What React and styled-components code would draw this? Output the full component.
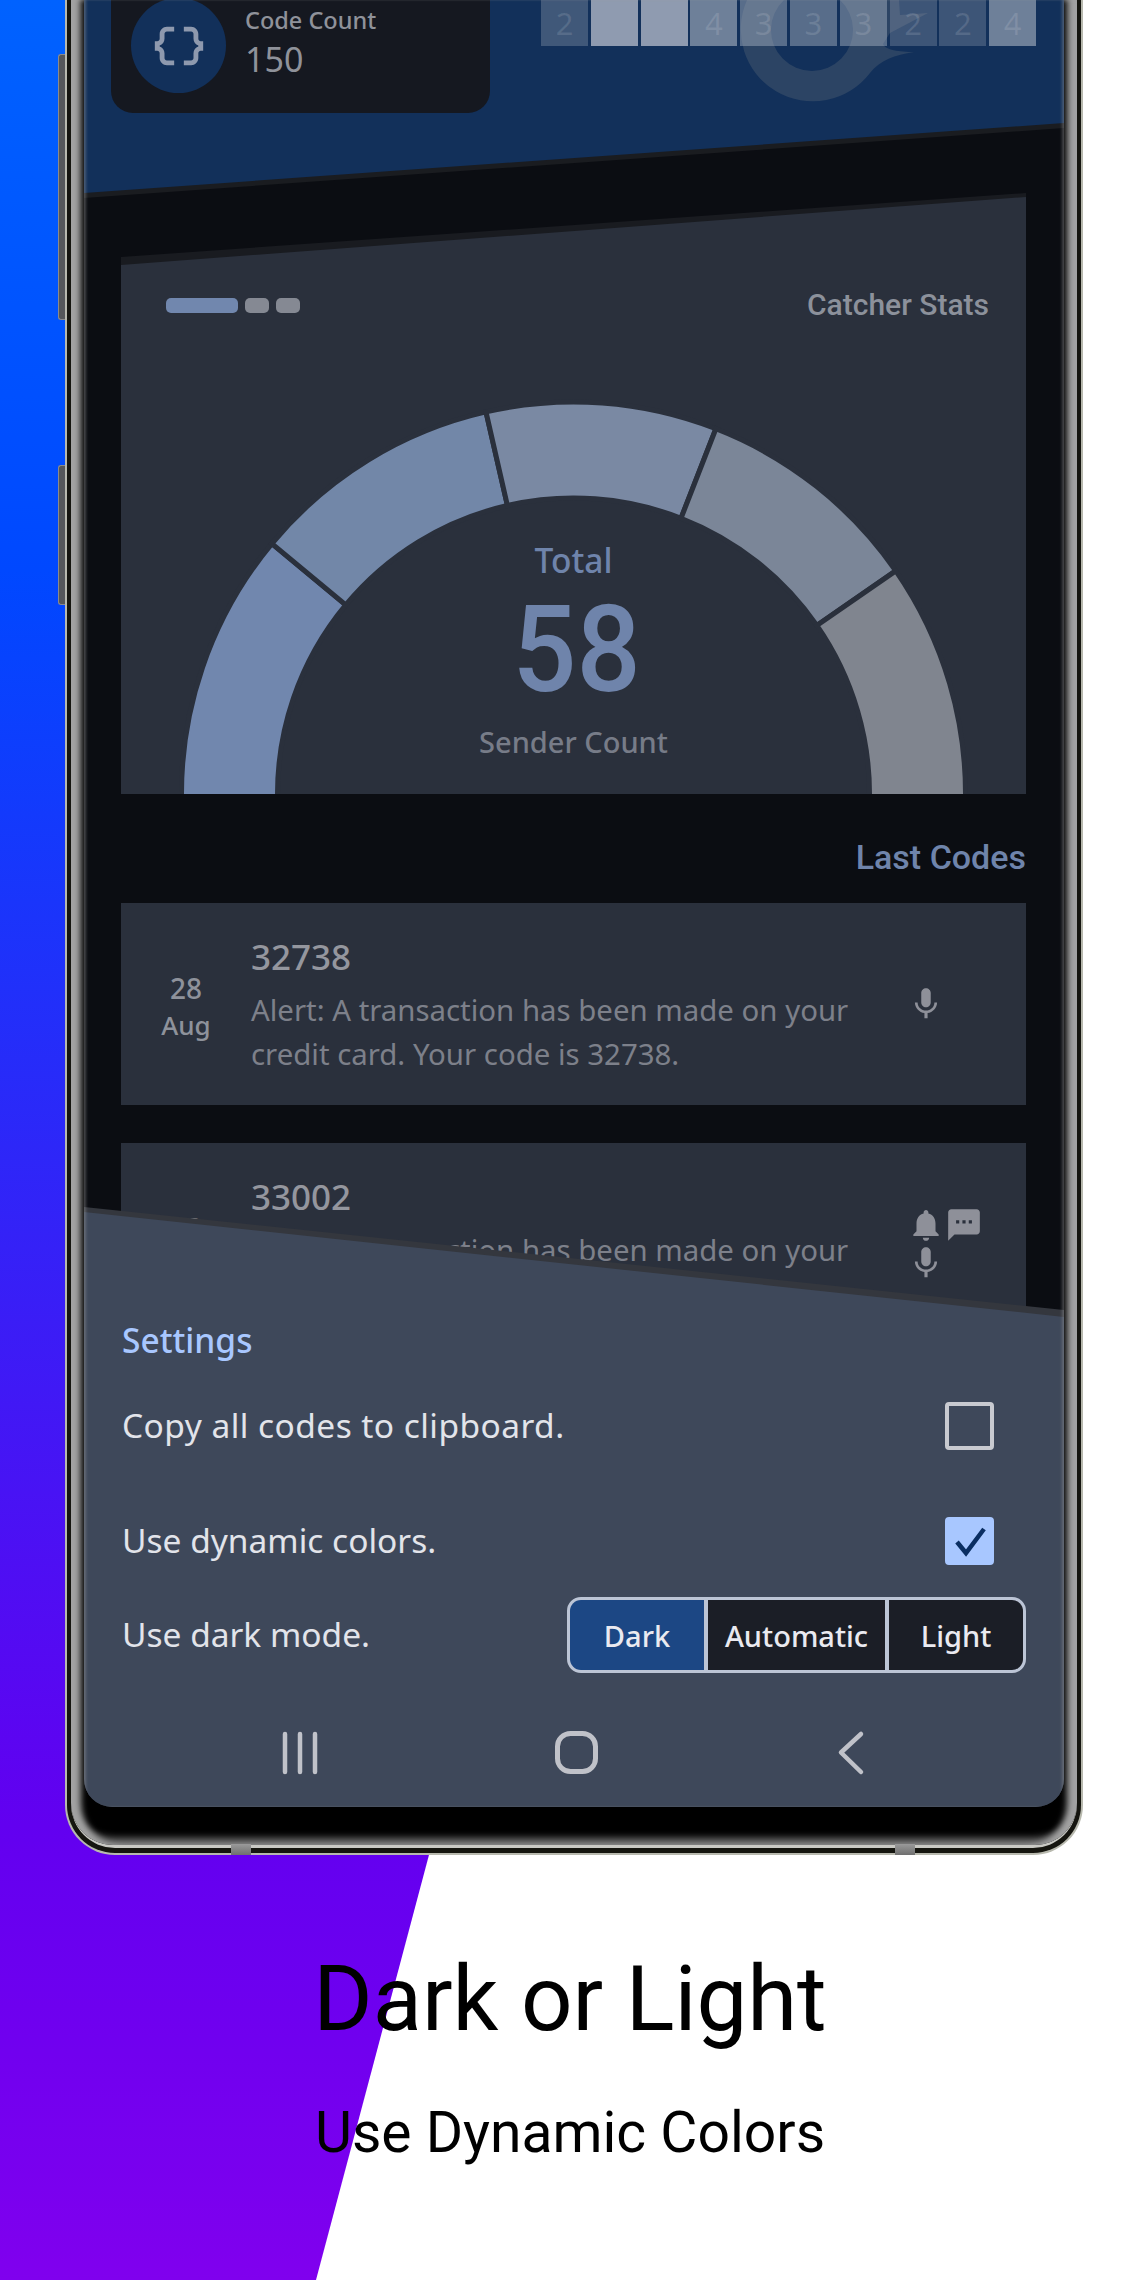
import styled, { createGlobalStyle } from "styled-components";

const GlobalStyle = createGlobalStyle`
  html, body {
    margin: 0;
    padding: 0;
    background: #fff;
  }
  * {
    box-sizing: border-box;
  }
`;

const HEAT_CELLS = [
  { level: 0.29, label: "2" },
  { level: 0.78, label: "" },
  { level: 0.78, label: "" },
  { level: 0.58, label: "4" },
  { level: 0.44, label: "3" },
  { level: 0.44, label: "3" },
  { level: 0.44, label: "3" },
  { level: 0.27, label: "2" },
  { level: 0.27, label: "2" },
  { level: 0.58, label: "4" },
];

const SEGMENTS = [
  { from: -2, to: 39.7, color: "#7187ae" },
  { from: 39.7, to: 77.1, color: "#7287a8" },
  { from: 77.1, to: 111.3, color: "#7a89a3" },
  { from: 111.3, to: 145.3, color: "#7b8698" },
  { from: 145.3, to: 182, color: "#80858f" },
];

const MESSAGE = "Alert: A transaction has been made on your credit card. Your code is ";

const ICONS = {
  mic: "M12 14c1.66 0 2.99-1.34 2.99-3L15 5c0-1.66-1.34-3-3-3S9 3.34 9 5v6c0 1.66 1.34 3 3 3zm5.3-3c0 3-2.54 5.1-5.3 5.1S6.7 14 6.7 11H5c0 3.41 2.72 6.23 6 6.72V21h2v-3.28c3.28-.48 6-3.3 6-6.72h-1.7z",
  bell: "M12 22c1.1 0 2-.9 2-2h-4c0 1.1.89 2 2 2zm6-6v-5c0-3.07-1.64-5.64-4.5-6.32V4c0-.83-.67-1.5-1.5-1.5s-1.5.67-1.5 1.5v.68C7.63 5.36 6 7.92 6 11v5l-2 2v1h16v-1l-2-2z",
  sms: "M20 2H4c-1.1 0-1.99.9-1.99 2L2 22l4-4h14c1.1 0 2-.9 2-2V4c0-1.1-.9-2-2-2zM9 11H7V9h2v2zm4 0h-2V9h2v2zm4 0h-2V9h2v2z",
};

const BRACES =
  "M4 7v2c0 .55-.45 1-1 1H2v4h1c.55 0 1 .45 1 1v2c0 1.65 1.35 3 3 3h3v-2H7c-.55 0-1-.45-1-1v-2c0-1.3-.84-2.42-2-2.83v-.34C5.16 11.42 6 10.3 6 9V7c0-.55.45-1 1-1h3V4H7C5.35 4 4 5.35 4 7zM21 10c-.55 0-1-.45-1-1V7c0-1.65-1.35-3-3-3h-3v2h3c.55 0 1 .45 1 1v2c0 1.3.84 2.42 2 2.83v.34c-1.16.41-2 1.52-2 2.83v2c0 .55-.45 1-1 1h-3v2h3c1.65 0 3-1.35 3-3v-2c0-.55.45-1 1-1h1v-4h-1z";

// donut slice, angles run clockwise from the left end of the half circle
const slicePath = (from, to) => {
  const cx = 389.5;
  const cy = 390;
  const outer = 392;
  const inner = 296;
  const point = (r, deg) => {
    const rad = (deg * Math.PI) / 180;
    return `${(cx - r * Math.cos(rad)).toFixed(2)} ${(cy - r * Math.sin(rad)).toFixed(2)}`;
  };
  return `M${point(outer, from)} A${outer} ${outer} 0 0 1 ${point(outer, to)} L${point(inner, to)} A${inner} ${inner} 0 0 0 ${point(inner, from)} Z`;
};

const MaterialIcon = ({ path, size = 38 }) => (
  <IconSvg viewBox="0 0 24 24" $size={size}>
    <path d={path} />
  </IconSvg>
);

const CodeRow = ({ code, icons }) => (
  <Row>
    <DateCol>
      <DateDay>28</DateDay>
      <DateMonth>Aug</DateMonth>
    </DateCol>
    <TextCol>
      <CodeValue>{code}</CodeValue>
      <CodeMessage>
        {MESSAGE}
        {code}.
      </CodeMessage>
    </TextCol>
    <IconCol>
      {icons.map((name) => (
        <MaterialIcon key={name} path={ICONS[name]} />
      ))}
    </IconCol>
  </Row>
);

const App = () => {
  return (
    <Page>
      <GlobalStyle />
      <Backdrop />
      <Device>
        <SideButton $top={54} $height={266} />
        <SideButton $top={465} $height={140} />
        <BottomNub $left={166} />
        <BottomNub $left={830} />
        <Rim>
          <Band>
            <Bezel>
              <Screen>
                <HeroEdge>
                  <Hero>
                    <Watermark viewBox="0 0 220 110" aria-hidden="true">
                      <path d="M27 0 A72 72 0 0 0 150 73 C 160 60 175 55 194 52 C 180 52 165 50 163 44 L 170 33 L 208 13 L 180 15 L 179 0 L 120 0 A41 41 0 1 1 64 0 Z" />
                    </Watermark>
                    <CountCard>
                      <CountBadge>
                        <BadgeSvg viewBox="0 0 24 24">
                          <path d={BRACES} />
                        </BadgeSvg>
                      </CountBadge>
                      <CountText>
                        <CountLabel>Code Count</CountLabel>
                        <CountValue>150</CountValue>
                      </CountText>
                    </CountCard>
                    <HeatRow>
                      {HEAT_CELLS.map((cell, i) => (
                        <HeatCell key={i} $level={cell.level}>
                          {cell.label}
                        </HeatCell>
                      ))}
                    </HeatRow>
                  </Hero>
                </HeroEdge>

                <Content>
                  <StatsEdge>
                    <StatsPanel>
                      <StatsHeader>
                        <Pills>
                          <Pill $width={72} $active />
                          <Pill $width={24} />
                          <Pill $width={24} />
                        </Pills>
                        <StatsTitle>Catcher Stats</StatsTitle>
                      </StatsHeader>
                      <Gauge>
                        <GaugeSvg viewBox="0 0 779 390">
                          {SEGMENTS.map((s) => (
                            <path
                              key={s.from}
                              d={slicePath(s.from, s.to)}
                              fill={s.color}
                              stroke="#2a303c"
                              strokeWidth="5"
                            />
                          ))}
                        </GaugeSvg>
                        <GaugeLabels>
                          <GaugeTotal>Total</GaugeTotal>
                          <GaugeNumber>58</GaugeNumber>
                          <GaugeCaption>Sender Count</GaugeCaption>
                        </GaugeLabels>
                      </Gauge>
                    </StatsPanel>
                  </StatsEdge>

                  <SectionLabel>Last Codes</SectionLabel>
                  <RowList>
                    <CodeRow code="32738" icons={["mic"]} />
                    <CodeRow code="33002" icons={["bell", "sms", "mic"]} />
                  </RowList>
                </Content>

                <SheetEdge>
                  <Sheet>
                    <SheetTitle>Settings</SheetTitle>
                    <SettingRow $height={48} $gap={42}>
                      <SettingLabel $spacing={0.45}>Copy all codes to clipboard.</SettingLabel>
                      <CheckBox />
                    </SettingRow>
                    <SettingRow $height={49} $gap={66}>
                      <SettingLabel>Use dynamic colors.</SettingLabel>
                      <CheckBox $checked>
                        <CheckSvg viewBox="0 0 36 36">
                          <path d="M5 19 L14 30 L32 6" />
                        </CheckSvg>
                      </CheckBox>
                    </SettingRow>
                    <SettingRow $height={76} $gap={32}>
                      <SettingLabel>Use dark mode.</SettingLabel>
                      <Segmented>
                        <Segment $width={134} $active>
                          Dark
                        </Segment>
                        <Segment $width={177}>Automatic</Segment>
                        <Segment $width={134}>Light</Segment>
                      </Segmented>
                    </SettingRow>
                    <NavBar>
                      <NavSvg width="34" height="43" viewBox="0 0 34 43">
                        <path d="M2 3 V41 M17 3 V41 M32 3 V41" />
                      </NavSvg>
                      <NavSvg width="43" height="43" viewBox="0 0 43 43" $weight={5}>
                        <rect x="0.5" y="2.5" width="38" height="38" rx="13" />
                      </NavSvg>
                      <NavSvg width="24" height="43" viewBox="0 0 24 43">
                        <path d="M22 3 L2 21.5 L22 41" />
                      </NavSvg>
                    </NavBar>
                  </Sheet>
                </SheetEdge>
                <ScreenGlow />
              </Screen>
            </Bezel>
          </Band>
        </Rim>
      </Device>

      <Caption>
        <CaptionTitle>Dark or Light</CaptionTitle>
        <CaptionText>Use Dynamic Colors</CaptionText>
      </Caption>
    </Page>
  );
};

export default App;

const Page = styled.div`
  position: relative;
  width: 1140px;
  height: 2280px;
  overflow: hidden;
  background: #fff;
`;

const Backdrop = styled.div`
  position: absolute;
  inset: 0;
  background: linear-gradient(180deg, #0062ff 0%, #0048ff 25%, #6200f0 80%, #8000ee 100%);
  clip-path: polygon(0 0, 922px 0, 316px 100%, 0 100%);
`;

const Device = styled.div`
  position: relative;
  width: 1018px;
  height: 1855px;
  margin-left: 65px;
  padding: 0 2px 2px;
  background: #b8b9ae;
  border-radius: 0 0 50px 50px;
`;

const SideButton = styled.div`
  position: absolute;
  left: -7px;
  top: ${(p) => p.$top}px;
  width: 7px;
  height: ${(p) => p.$height}px;
  background: #55575a;
  border: 1px solid #8b8b8b;
  border-right: 0;
  border-radius: 3px 0 0 3px;
`;

const BottomNub = styled.div`
  position: absolute;
  bottom: 0;
  left: ${(p) => p.$left}px;
  width: 20px;
  height: 11px;
  background: linear-gradient(180deg, #9a9a9a, #6f6f6f);
  z-index: 2;
`;

const Rim = styled.div`
  height: 100%;
  padding: 0 4px 5px;
  background: #15150f;
  border-radius: 0 0 48px 48px;
`;

const Band = styled.div`
  height: 100%;
  padding-bottom: 3px;
  background: #c9c9c4;
  border-radius: 0 0 44px 44px;
`;

const Bezel = styled.div`
  height: 100%;
  padding: 0 13px 38px;
  background: #000;
  border-radius: 0 0 42px 42px;
  box-shadow: inset 12px 0 6px -2px #a2a2a2, inset -12px 0 6px -2px #a2a2a2, inset 0 -7px 7px #6d6d6d;
`;

const Screen = styled.div`
  position: relative;
  height: 100%;
  background: #0b0d12;
  overflow: hidden;
  border-radius: 0 0 28px 28px;
`;

const ScreenGlow = styled.div`
  position: absolute;
  inset: 0;
  pointer-events: none;
  box-shadow: inset 3px 0 3px -1px rgba(160, 160, 160, 0.4), inset -3px 0 3px -1px rgba(160, 160, 160, 0.4);
`;

const HeroEdge = styled.div`
  height: 198px;
  background: #1a1c20;
  clip-path: polygon(0 0, 100% 0, 100% 128px, 0 198px);
`;

const Hero = styled.div`
  position: relative;
  display: flex;
  align-items: flex-start;
  gap: 51px;
  height: 193px;
  padding-left: 27px;
  background: #12305a;
  clip-path: polygon(0 0, 100% 0, 100% 123px, 0 193px);
`;

const Watermark = styled.svg`
  position: absolute;
  left: 636px;
  top: 0;
  width: 220px;
  height: 110px;
  fill: #2c4464;
`;

const CountCard = styled.div`
  position: relative;
  display: flex;
  align-items: flex-start;
  gap: 20px;
  width: 379px;
  height: 113px;
  padding-left: 20px;
  background: #151820;
  border-radius: 0 0 22px 22px;
`;

const CountBadge = styled.div`
  display: flex;
  align-items: center;
  justify-content: center;
  flex: none;
  width: 95px;
  height: 95px;
  margin-top: -2px;
  background: #12305a;
  border-radius: 50%;
`;

const BadgeSvg = styled.svg`
  width: 58px;
  height: 58px;
  fill: #8e99ae;
`;

const CountText = styled.div`
  display: flex;
  flex-direction: column;
  margin-left: -1px;
  font-family: "Noto Sans", sans-serif;
  color: #8f929a;
`;

const CountLabel = styled.div`
  font-size: 23.5px;
  font-weight: 500;
  line-height: 40px;
`;

const CountValue = styled.div`
  font-size: 34px;
  line-height: 38px;
`;

const HeatRow = styled.div`
  position: relative;
  display: flex;
  gap: 2.8px;
`;

const HeatCell = styled.div`
  display: flex;
  align-items: center;
  justify-content: center;
  width: 47px;
  height: 46px;
  background: rgba(178, 186, 200, ${(p) => p.$level});
  color: rgba(255, 255, 255, 0.12);
  font-family: "Noto Sans", sans-serif;
  font-size: 31px;
`;

const Content = styled.div`
  padding: 0 38px 0 37px;
`;

const StatsEdge = styled.div`
  height: 602px;
  margin-top: -6px;
  background: #191b20;
  clip-path: polygon(0 65px, 100% 1px, 100% 100%, 0 100%);
`;

const StatsPanel = styled.div`
  height: 100%;
  padding-top: 93px;
  background: #2a303c;
  clip-path: polygon(0 73px, 100% 5px, 100% 100%, 0 100%);
`;

const StatsHeader = styled.div`
  display: flex;
  align-items: center;
  justify-content: space-between;
  height: 40px;
  padding: 0 37px 0 45px;
`;

const Pills = styled.div`
  display: flex;
  gap: 7px;
`;

const Pill = styled.div`
  width: ${(p) => p.$width}px;
  height: 15px;
  border-radius: 5px;
  background: ${(p) => (p.$active ? "#7187ae" : "#858993")};
`;

const StatsTitle = styled.div`
  margin-top: -2px;
  font-family: Roboto, sans-serif;
  font-size: 30px;
  font-weight: 500;
  color: #8c919b;
`;

const Gauge = styled.div`
  display: grid;
  width: 779px;
  height: 390px;
  margin: 79px auto 0;
`;

const GaugeSvg = styled.svg`
  grid-area: 1 / 1;
  width: 779px;
  height: 390px;
  overflow: visible;
`;

const GaugeLabels = styled.div`
  grid-area: 1 / 1;
  align-self: end;
  display: flex;
  flex-direction: column;
  align-items: center;
  padding-bottom: 32px;
  text-align: center;
`;

const GaugeTotal = styled.div`
  font-family: "Noto Sans", sans-serif;
  font-size: 33.5px;
  font-weight: 500;
  line-height: 40px;
  color: #6f84ab;
`;

const GaugeNumber = styled.div`
  margin: 16px 0 16px 6px;
  font-family: Roboto, sans-serif;
  font-size: 113px;
  font-weight: 500;
  line-height: 110px;
  color: #6f84ab;
  transform: scaleY(1.06);
`;

const GaugeCaption = styled.div`
  font-family: "Noto Sans", sans-serif;
  font-size: 29px;
  font-weight: 500;
  line-height: 40px;
  color: #777c88;
`;

const SectionLabel = styled.div`
  margin: 43px 0 26px;
  font-family: Roboto, sans-serif;
  font-size: 34px;
  font-weight: 500;
  line-height: 40px;
  text-align: right;
  color: #6f84ab;
`;

const RowList = styled.div`
  display: flex;
  flex-direction: column;
  gap: 38px;
`;

const Row = styled.div`
  display: grid;
  grid-template-columns: 130px 640px 92px;
  height: 202px;
  background: #2a303c;
  font-family: "Noto Sans", sans-serif;
`;

const DateCol = styled.div`
  align-self: center;
  margin-top: 4px;
  text-align: center;
  color: #8e929b;
`;

const DateDay = styled.div`
  font-size: 28px;
  font-weight: 550;
  line-height: 40px;
`;

const DateMonth = styled.div`
  margin-top: -3px;
  font-size: 26px;
  font-weight: 500;
  line-height: 40px;
`;

const TextCol = styled.div`
  padding-top: 34px;
`;

const CodeValue = styled.div`
  margin-bottom: 11px;
  font-size: 35px;
  font-weight: 550;
  line-height: 40px;
  color: #94969e;
`;

const CodeMessage = styled.div`
  font-size: 29.4px;
  line-height: 44px;
  color: #7d808a;
`;

const IconCol = styled.div`
  display: flex;
  flex-wrap: wrap;
  align-content: center;
  padding-left: 16px;
`;

const IconSvg = styled.svg`
  flex: none;
  width: ${(p) => p.$size}px;
  height: ${(p) => p.$size}px;
  fill: #8e9099;
`;

const SheetEdge = styled.div`
  position: absolute;
  left: 0;
  right: 0;
  bottom: 0;
  height: 607px;
  background: #34373e;
  clip-path: polygon(0 7px, 100% 110px, 100% 100%, 0 100%);
`;

const Sheet = styled.div`
  height: 100%;
  padding: 122px 38px 0;
  background: #3e485a;
  clip-path: polygon(0 12px, 100% 117px, 100% 100%, 0 100%);
  font-family: "Noto Sans", sans-serif;
`;

const SheetTitle = styled.div`
  margin-top: -2px;
  font-size: 33.5px;
  font-weight: 550;
  line-height: 40px;
  color: #a8c7ff;
`;

const SettingRow = styled.div`
  display: flex;
  align-items: center;
  justify-content: space-between;
  height: ${(p) => p.$height}px;
  margin-top: ${(p) => p.$gap}px;
`;

const SettingLabel = styled.div`
  margin-top: -2px;
  font-size: 33.5px;
  letter-spacing: ${(p) => p.$spacing || 0}px;
  color: #e2e4ea;
`;

const CheckBox = styled.div`
  display: flex;
  align-items: center;
  justify-content: center;
  width: 49px;
  height: 48px;
  margin-right: 32px;
  border: 4px solid ${(p) => (p.$checked ? "#a8c7ff" : "#c8cad0")};
  border-radius: 4px;
  background: ${(p) => (p.$checked ? "#a8c7ff" : "transparent")};
`;

const CheckSvg = styled.svg`
  width: 36px;
  height: 36px;
  fill: none;
  stroke: #0a2e62;
  stroke-width: 4.5;
`;

const Segmented = styled.div`
  display: flex;
  gap: 4px;
  width: 459px;
  height: 76px;
  overflow: hidden;
  background: #bcc5d6;
  border: 3px solid #bcc5d6;
  border-radius: 14px;
`;

const Segment = styled.div`
  display: flex;
  align-items: center;
  justify-content: center;
  width: ${(p) => p.$width}px;
  background: ${(p) => (p.$active ? "#1c4784" : "#1b1e26")};
  font-size: 29px;
  font-weight: 500;
  color: #eaeaf0;
`;

const NavBar = styled.div`
  display: flex;
  justify-content: space-between;
  align-items: center;
  height: 43px;
  margin-top: 58px;
  padding: 0 163px 0 161px;
`;

const NavSvg = styled.svg`
  overflow: visible;
  fill: none;
  stroke: #c0c2c9;
  stroke-width: ${(p) => p.$weight || 4.5};
  stroke-linecap: round;
  stroke-linejoin: round;
`;

const Caption = styled.div`
  position: relative;
  padding-top: 89px;
  text-align: center;
  font-family: Roboto, sans-serif;
  color: #000;
`;

const CaptionTitle = styled.div`
  font-size: 90.5px;
  line-height: 110px;
`;

const CaptionText = styled.div`
  margin-top: 44px;
  font-size: 57px;
  line-height: 70px;
`;
